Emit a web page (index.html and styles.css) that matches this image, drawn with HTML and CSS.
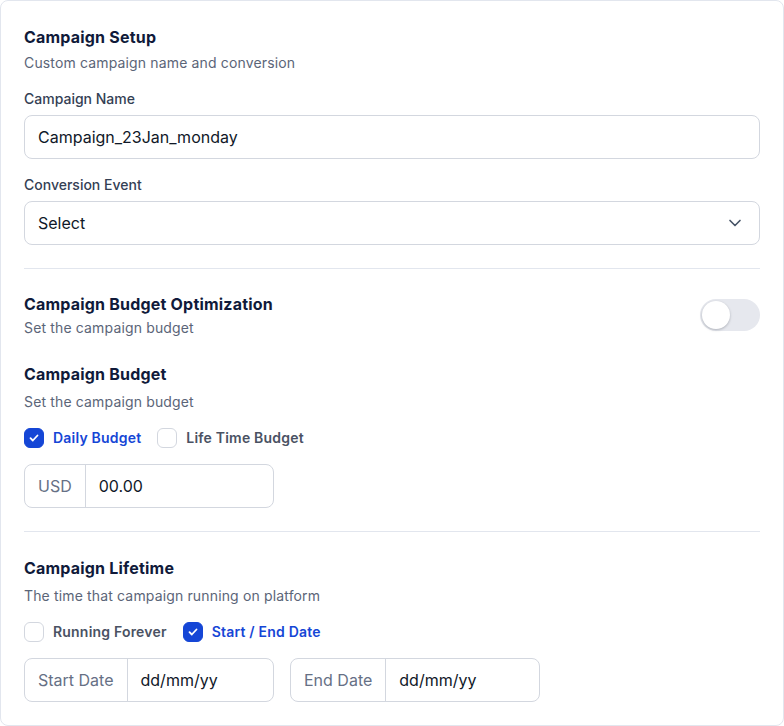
FILE: index.html
```html
<!DOCTYPE html>
<html>
<head>
<meta charset="utf-8">
<link rel="stylesheet" href="styles.css">
</head>
<body>
<div class="card">
  <section class="section">
    <h2 class="title">Campaign Setup</h2>
    <p class="subtitle">Custom campaign name and conversion</p>
    <label class="label">Campaign Name</label>
    <div class="input"><span class="value">Campaign_23Jan_monday</span></div>
    <label class="label">Conversion Event</label>
    <div class="input select">
      <span class="value">Select</span>
      <svg class="chevron" width="20" height="20" viewBox="0 0 20 20" fill="none"><path d="M5 7.5l5 5 5-5" stroke="#475467" stroke-width="1.67" stroke-linecap="round" stroke-linejoin="round"/></svg>
    </div>
  </section>
  <hr class="divider">
  <section class="section">
    <div class="row-between">
      <div>
        <h2 class="title">Campaign Budget Optimization</h2>
        <p class="subtitle tight">Set the campaign budget</p>
      </div>
      <div class="toggle"><span class="knob"></span></div>
    </div>
    <h2 class="title mt">Campaign Budget</h2>
    <p class="subtitle loose">Set the campaign budget</p>
    <div class="checks">
      <div class="check checked"><span class="box"><svg width="12" height="12" viewBox="0 0 12 12" fill="none"><path d="M2.5 6.2l2.3 2.3 4.7-5" stroke="#fff" stroke-width="1.8" stroke-linecap="round" stroke-linejoin="round"/></svg></span><span class="ctext">Daily Budget</span></div>
      <div class="check"><span class="box"></span><span class="ctext">Life Time Budget</span></div>
    </div>
    <div class="addon-input w250">
      <span class="addon">USD</span>
      <span class="value">00.00</span>
    </div>
  </section>
  <hr class="divider">
  <section class="section lifetime">
    <h2 class="title">Campaign Lifetime</h2>
    <p class="subtitle loose">The time that campaign running on platform</p>
    <div class="checks">
      <div class="check"><span class="box"></span><span class="ctext">Running Forever</span></div>
      <div class="check checked"><span class="box"><svg width="12" height="12" viewBox="0 0 12 12" fill="none"><path d="M2.5 6.2l2.3 2.3 4.7-5" stroke="#fff" stroke-width="1.8" stroke-linecap="round" stroke-linejoin="round"/></svg></span><span class="ctext">Start / End Date</span></div>
    </div>
    <div class="dates">
      <div class="addon-input w250">
        <span class="addon">Start Date</span>
        <span class="value">dd/mm/yy</span>
      </div>
      <div class="addon-input w250">
        <span class="addon">End Date</span>
        <span class="value">dd/mm/yy</span>
      </div>
    </div>
  </section>
</div>
</body>
</html>
```
FILE: styles.css
```css
* { box-sizing: border-box; }
html, body { margin: 0; padding: 0; background: #fff; }
body {
  font-family: Inter, "Noto Sans", sans-serif;
  color: #101828;
  -webkit-font-smoothing: antialiased;
}
.card {
  width: 784px;
  height: 726px;
  border: 1px solid #e2e6ee;
  border-radius: 8px;
  padding: 24px 23px 23px 23px;
}
.section { display: flex; flex-direction: column; }
.section.lifetime { padding-top: 1px; }
.title {
  margin: 0;
  font-size: 16px;
  line-height: 24px;
  font-weight: 700;
  letter-spacing: 0.2px;
  color: #101a3a;
}
.title.mt { margin-top: 24px; }
.subtitle {
  margin: 4px 0 0;
  font-size: 14px;
  line-height: 20px;
  letter-spacing: 0.15px;
  color: #5b6578;
}
.subtitle.tight { margin-top: 2px; }
.subtitle.loose { margin-top: 6px; }
.label {
  margin-top: 16px;
  font-size: 14px;
  line-height: 20px;
  font-weight: 500;
  color: #344054;
}
.input {
  margin-top: 6px;
  height: 44px;
  border: 1px solid #d3d7df;
  border-radius: 8px;
  padding: 0 13px;
  display: flex;
  align-items: center;
  font-size: 16px;
  color: #101828;
}
.select { justify-content: space-between; padding-right: 14px; }
.chevron { display: block; }
.divider {
  border: 0;
  border-top: 1px solid #e2e6ee;
  margin: 23px 0 23px;
}
.row-between {
  display: flex;
  justify-content: space-between;
  align-items: center;
}
.toggle {
  width: 60px;
  height: 32px;
  border-radius: 16px;
  background: #e6e8ee;
  padding: 2px;
}
.knob {
  display: block;
  width: 28px;
  height: 28px;
  border-radius: 50%;
  background: #fff;
  box-shadow: 0 1px 3px rgba(16,24,40,0.18), 0 1px 2px rgba(16,24,40,0.08);
}
.checks {
  margin-top: 16px;
  display: flex;
  gap: 16px;
  align-items: center;
}
.check { display: flex; align-items: center; gap: 9px; }
.box {
  width: 20px;
  height: 20px;
  border-radius: 6px;
  border: 1px solid #d3d7df;
  background: #fff;
  display: flex;
  align-items: center;
  justify-content: center;
}
.check.checked .box { background: #1546d6; border-color: #1546d6; }
.ctext {
  font-size: 14px;
  line-height: 20px;
  font-weight: 600;
  letter-spacing: 0.2px;
  color: #4a5263;
}
.check.checked .ctext { color: #1546d6; }
.addon-input {
  margin-top: 16px;
  height: 44px;
  border: 1px solid #d3d7df;
  border-radius: 8px;
  display: flex;
  align-items: stretch;
  font-size: 16px;
}
.w250 { width: 250px; }
.addon {
  display: flex;
  align-items: center;
  padding: 0 13px;
  border-right: 1px solid #d3d7df;
  color: #667085;
}
.addon-input .value {
  display: flex;
  align-items: center;
  padding-left: 13px;
  color: #101828;
}
.dates { display: flex; gap: 16px; }
```
